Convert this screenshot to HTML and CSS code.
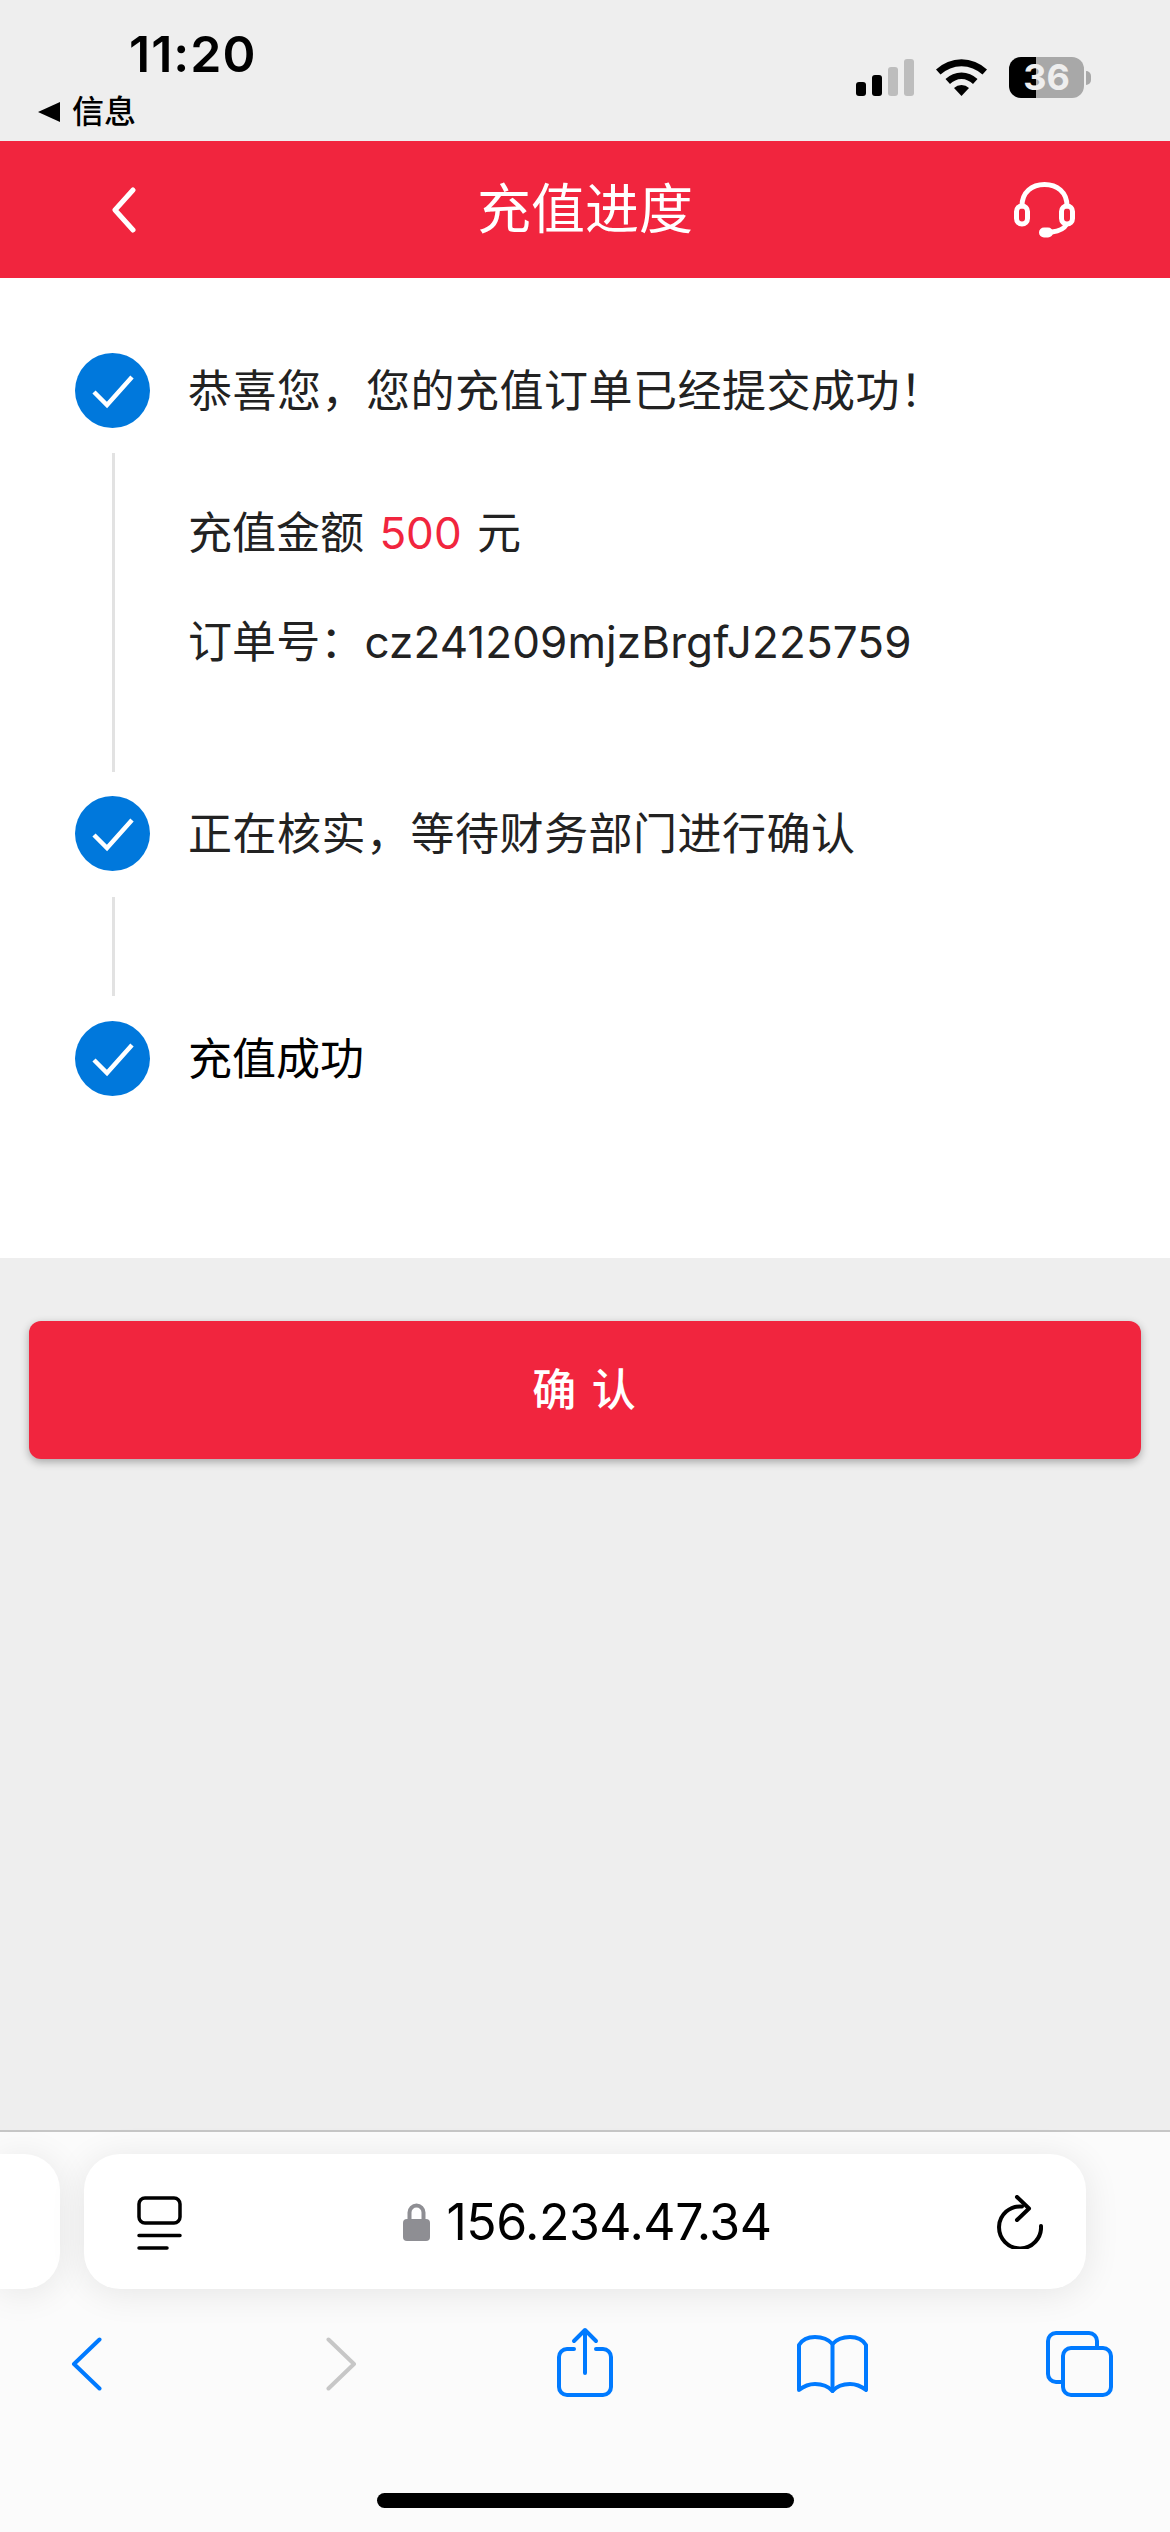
FILE: index.html
```html
<!DOCTYPE html>
<html lang="zh-CN">
<head>
  <meta charset="UTF-8" />
  <meta name="viewport" content="width=device-width, initial-scale=1.0"/>
  <title>充值进度</title>
  <link rel="stylesheet" href="styles.css">
</head>
<body>

  <div class="status-bar">
    <div class="status-left">
      <div class="time">11:20</div>
      <div class="back-app"><span class="back-tri"></span>信息</div>
    </div>
    <div class="status-right">
      <div class="signal">
        <span class="bar bar-1"></span>
        <span class="bar bar-2"></span>
        <span class="bar bar-3"></span>
        <span class="bar bar-4"></span>
      </div>
      <svg class="wifi" width="51" height="37" viewBox="0 0 51 37">
        <path d="M0 10.5A37 37 0 0 1 51 10.5L46.5 15.5A31 31 0 0 0 4.5 15.5Z"/>
        <path d="M9.5 20A23 23 0 0 1 41.5 20L37 25A16 16 0 0 0 14 25Z"/>
        <path d="M18 29A11 11 0 0 1 33 29L25.5 37Z"/>
      </svg>
      <div class="battery-wrap">
        <div class="battery">36</div>
        <div class="battery-nub"></div>
      </div>
    </div>
  </div>

  <header class="nav">
    <svg class="nav-back" width="24" height="46" viewBox="0 0 24 46">
      <path d="M21 3L3 23L21 43"/>
    </svg>
    <h1>充值进度</h1>
    <svg class="nav-help" width="61" height="56" viewBox="0 0 61 56">
      <path d="M8 24C8 10 18 2.500 30.500 2.500C43 2.500 53 10 53 24"/>
      <rect x="2.500" y="24" width="11" height="18" rx="5.500"/>
      <rect x="47.500" y="24" width="11" height="18" rx="5.500"/>
      <path d="M52 43C50 47 45 49 38 50"/>
      <rect x="27.500" y="48" width="9" height="5" rx="2.500"/>
    </svg>
  </header>

  <main class="progress">
    <div class="step">
      <svg class="step-icon" width="75" height="75" viewBox="0 0 75 75">
        <circle cx="37.500" cy="37.500" r="37.500"/>
        <path d="M19 39L32 52L57 24"/>
      </svg>
      <p>恭喜您，您的充值订单已经提交成功！</p>
    </div>
    <div class="step-line step-line-long">
      <p class="amount-row">充值金额 <span class="amount">500</span> 元</p>
      <p class="order-row">订单号：cz241209mjzBrgfJ225759</p>
    </div>
    <div class="step">
      <svg class="step-icon" width="75" height="75" viewBox="0 0 75 75">
        <circle cx="37.500" cy="37.500" r="37.500"/>
        <path d="M19 39L32 52L57 24"/>
      </svg>
      <p>正在核实，等待财务部门进行确认</p>
    </div>
    <div class="step-line step-line-short"></div>
    <div class="step step-last">
      <svg class="step-icon" width="75" height="75" viewBox="0 0 75 75">
        <circle cx="37.500" cy="37.500" r="37.500"/>
        <path d="M19 39L32 52L57 24"/>
      </svg>
      <p>充值成功</p>
    </div>
  </main>

  <div class="actions">
    <button class="btn-confirm">确 认</button>
  </div>

  <footer class="browser">
    <div class="url-row">
      <div class="tab-peek"></div>
      <div class="url-card">
        <svg class="page-icon" width="45" height="55" viewBox="0 0 45 55">
          <rect x="2" y="2" width="41" height="25" rx="6"/>
          <path d="M2 39.500H43M2 52H30"/>
        </svg>
        <div class="address">
          <svg width="27" height="39" viewBox="0 0 27 39">
            <path class="lock-loop" d="M6.500 19V10.500A7 7 0 0 1 20.500 10.500V19"/>
            <rect class="lock-body" y="17" width="27" height="22" rx="4"/>
          </svg>
          <span>156.234.47.34</span>
        </div>
        <svg class="reload" width="46" height="54" viewBox="0 0 46 54">
          <path d="M44 31A21 21 0 1 1 25 11.500"/>
          <path d="M20 2L32 13.500L20 25"/>
        </svg>
      </div>
    </div>
    <div class="tools">
      <svg class="tool tool-back" width="31" height="54" viewBox="0 0 31 54">
        <path d="M28.500 2.500L3 27L28.500 51.500"/>
      </svg>
      <svg class="tool tool-forward" width="31" height="54" viewBox="0 0 31 54">
        <path d="M2.500 2.500L28 27L2.500 51.500"/>
      </svg>
      <svg class="tool tool-share" width="56" height="70" viewBox="0 0 56 70">
        <path d="M17 22H10A8 8 0 0 0 2 30V60A8 8 0 0 0 10 68H46A8 8 0 0 0 54 60V30A8 8 0 0 0 46 22H39"/>
        <path d="M28 46V3M17 14L28 3L39 14"/>
      </svg>
      <svg class="tool tool-book" width="71" height="59" viewBox="0 0 71 59">
        <path d="M35.500 9V56"/>
        <path d="M35.500 9C31 4 25 2 18 2C11 2 5 5 2 10V55C7 51 12 49 18 49C25 49 31 51 35.500 56C40 51 46 49 53 49C59 49 64 51 69 55V10C66 5 60 2 53 2C46 2 40 4 35.500 9Z"/>
      </svg>
      <svg class="tool tool-tabs" width="67" height="66" viewBox="0 0 67 66">
        <path d="M17 51H10A8 8 0 0 1 2 43V10A8 8 0 0 1 10 2H43A8 8 0 0 1 51 10V17"/>
        <rect x="17" y="17" width="48" height="47" rx="8"/>
      </svg>
    </div>
    <div class="home-bar"></div>
  </footer>

</body>
</html>
```

FILE: styles.css
```css
body {
  font-family: Inter, 'Noto Sans CJK SC', sans-serif;
  background-color: #eee;
  color: #222;
  margin: 0;
  padding: 0;
  height: 2532px;
  overflow: hidden;
  display: flex;
  flex-direction: column;
}

p, h1 {
  margin: 0;
  font-weight: 400;
}

/* status bar */
.status-bar {
  height: 141px;
  display: flex;
  justify-content: space-between;
  color: #000;
}

.status-left {
  padding-left: 38px;
}

.time {
  font-family: Inter, sans-serif;
  font-size: 50px;
  font-weight: 600;
  line-height: 50px;
  margin: 29px 0 0 91px;
  letter-spacing: 1px;
}

.back-app {
  display: flex;
  align-items: center;
  gap: 12px;
  font-size: 32px;
  font-weight: 500;
  line-height: 36px;
  margin-top: 15px;
}

.back-tri {
  width: 0;
  height: 0;
  border-top: 10px solid transparent;
  border-bottom: 10px solid transparent;
  border-right: 22px solid #000;
}

.status-right {
  display: flex;
  gap: 22px;
  padding: 57px 79px 0 0;
  align-items: flex-start;
}

.signal {
  display: flex;
  gap: 6px;
  align-items: flex-end;
  height: 39px;
}

.bar {
  width: 10px;
  border-radius: 3px;
  background-color: #000;
}

.bar-1 { height: 14px; }
.bar-2 { height: 21px; }
.bar-3 { height: 29px; background-color: #bdbdbd; }
.bar-4 { height: 37px; background-color: #bdbdbd; }

.wifi {
  margin-top: 2px;
}

.battery-wrap {
  display: flex;
  align-items: center;
  gap: 2px;
}

.battery {
  width: 75px;
  height: 41px;
  border-radius: 12px;
  background: linear-gradient(to right, #000 36%, #a8a8a8 36%);
  color: #eee;
  font-family: Inter, sans-serif;
  font-size: 36px;
  font-weight: 700;
  line-height: 41px;
  text-align: center;
}

.battery-nub {
  width: 5px;
  height: 14px;
  border-radius: 0 7px 7px 0;
  background-color: #a8a8a8;
}

/* red title bar */
.nav {
  height: 137px;
  background-color: #f1253e;
  color: #fff;
  padding: 0 95px;
  display: grid;
  grid-template-columns: 1fr auto 1fr;
  align-items: center;
}

.nav h1 {
  font-size: 54px;
  line-height: 60px;
}

.nav svg {
  fill: none;
  stroke: #fff;
  stroke-width: 5;
  stroke-linecap: round;
  stroke-linejoin: round;
}

.nav-back {
  margin-left: 17px;
}

.nav-help {
  justify-self: end;
}

/* progress steps */
.progress {
  background-color: #fff;
  height: 980px;
  box-sizing: border-box;
  padding: 75px 0 0 75px;
  font-size: 44px;
  line-height: 60px;
}

.step {
  display: flex;
  align-items: center;
  gap: 38px;
  height: 75px;
  letter-spacing: 0.5px;
}

.step-last {
  color: #000;
  letter-spacing: 0;
}

.step-icon {
  flex: none;
  fill: #0078dc;
}

.step-icon path {
  fill: none;
  stroke: #fff;
  stroke-width: 4.500;
}

.step-line {
  margin-left: 37px;
  border-left: 3px solid #e2e2e2;
  padding-left: 73px;
  box-sizing: border-box;
}

.step-line-long {
  height: 319px;
  margin-top: 25px;
  margin-bottom: 24px;
  padding-top: 50px;
}

.amount-row {
  word-spacing: 3px;
}

.order-row {
  margin-top: 49px;
  letter-spacing: 0.1px;
}

.step-line-short {
  height: 99px;
  margin-top: 26px;
  margin-bottom: 25px;
}

.amount {
  color: #f1253e;
}

/* confirm button */
.actions {
  padding: 63px 29px 0;
}

.btn-confirm {
  width: 100%;
  height: 138px;
  padding: 0 0 6px;
  background-color: #f1253e;
  color: #fff;
  border: none;
  border-radius: 12px;
  box-shadow: 0 3px 8px rgba(0, 0, 0, 0.3);
  font-family: inherit;
  font-size: 44px;
  font-weight: 500;
  letter-spacing: 2px;
}

/* safari toolbar */
.browser {
  margin-top: auto;
  height: 402px;
  box-sizing: border-box;
  border-top: 2px solid #c6c6c6;
  background-color: #fbfbfb;
  padding-top: 22px;
}

.url-row {
  display: flex;
  gap: 24px;
}

.tab-peek, .url-card {
  height: 135px;
  background-color: #fff;
  box-shadow: 0 4px 36px rgba(0, 0, 0, 0.09);
}

.tab-peek {
  width: 60px;
  border-radius: 0 36px 36px 0;
}

.url-card {
  width: 1002px;
  box-sizing: border-box;
  border-radius: 36px;
  padding: 0 43px;
  display: grid;
  grid-template-columns: 1fr auto 1fr;
  align-items: center;
}

.page-icon {
  margin: 3px 0 0 10px;
  fill: none;
  stroke: #000;
  stroke-width: 3.500;
  stroke-linecap: round;
}

.address {
  display: flex;
  align-items: center;
  gap: 17px;
  margin-left: 4px;
  color: #000;
  font-family: Inter, sans-serif;
  font-size: 50px;
  letter-spacing: -0.5px;
  line-height: 60px;
}

.lock-loop {
  fill: none;
  stroke: #8e8e93;
  stroke-width: 4;
}

.lock-body {
  fill: #8e8e93;
}

.reload {
  justify-self: end;
  fill: none;
  stroke: #000;
  stroke-width: 4;
  stroke-linecap: round;
  stroke-linejoin: round;
}

.tools {
  display: flex;
  align-items: center;
  height: 74px;
  margin-top: 38px;
  padding-left: 71px;
}

.tool {
  fill: none;
  stroke: #007aff;
  stroke-width: 4;
  stroke-linecap: round;
  stroke-linejoin: round;
}

.tool-forward {
  stroke: #c7c7c7;
  margin-left: 224px;
}

.tool-share {
  align-self: flex-start;
  margin-left: 200px;
}

.tool-book {
  margin-left: 184px;
}

.tool-tabs {
  margin-left: 178px;
}

.home-bar {
  width: 417px;
  height: 15px;
  border-radius: 8px;
  background-color: #000;
  margin: 92px auto 0;
}
```
